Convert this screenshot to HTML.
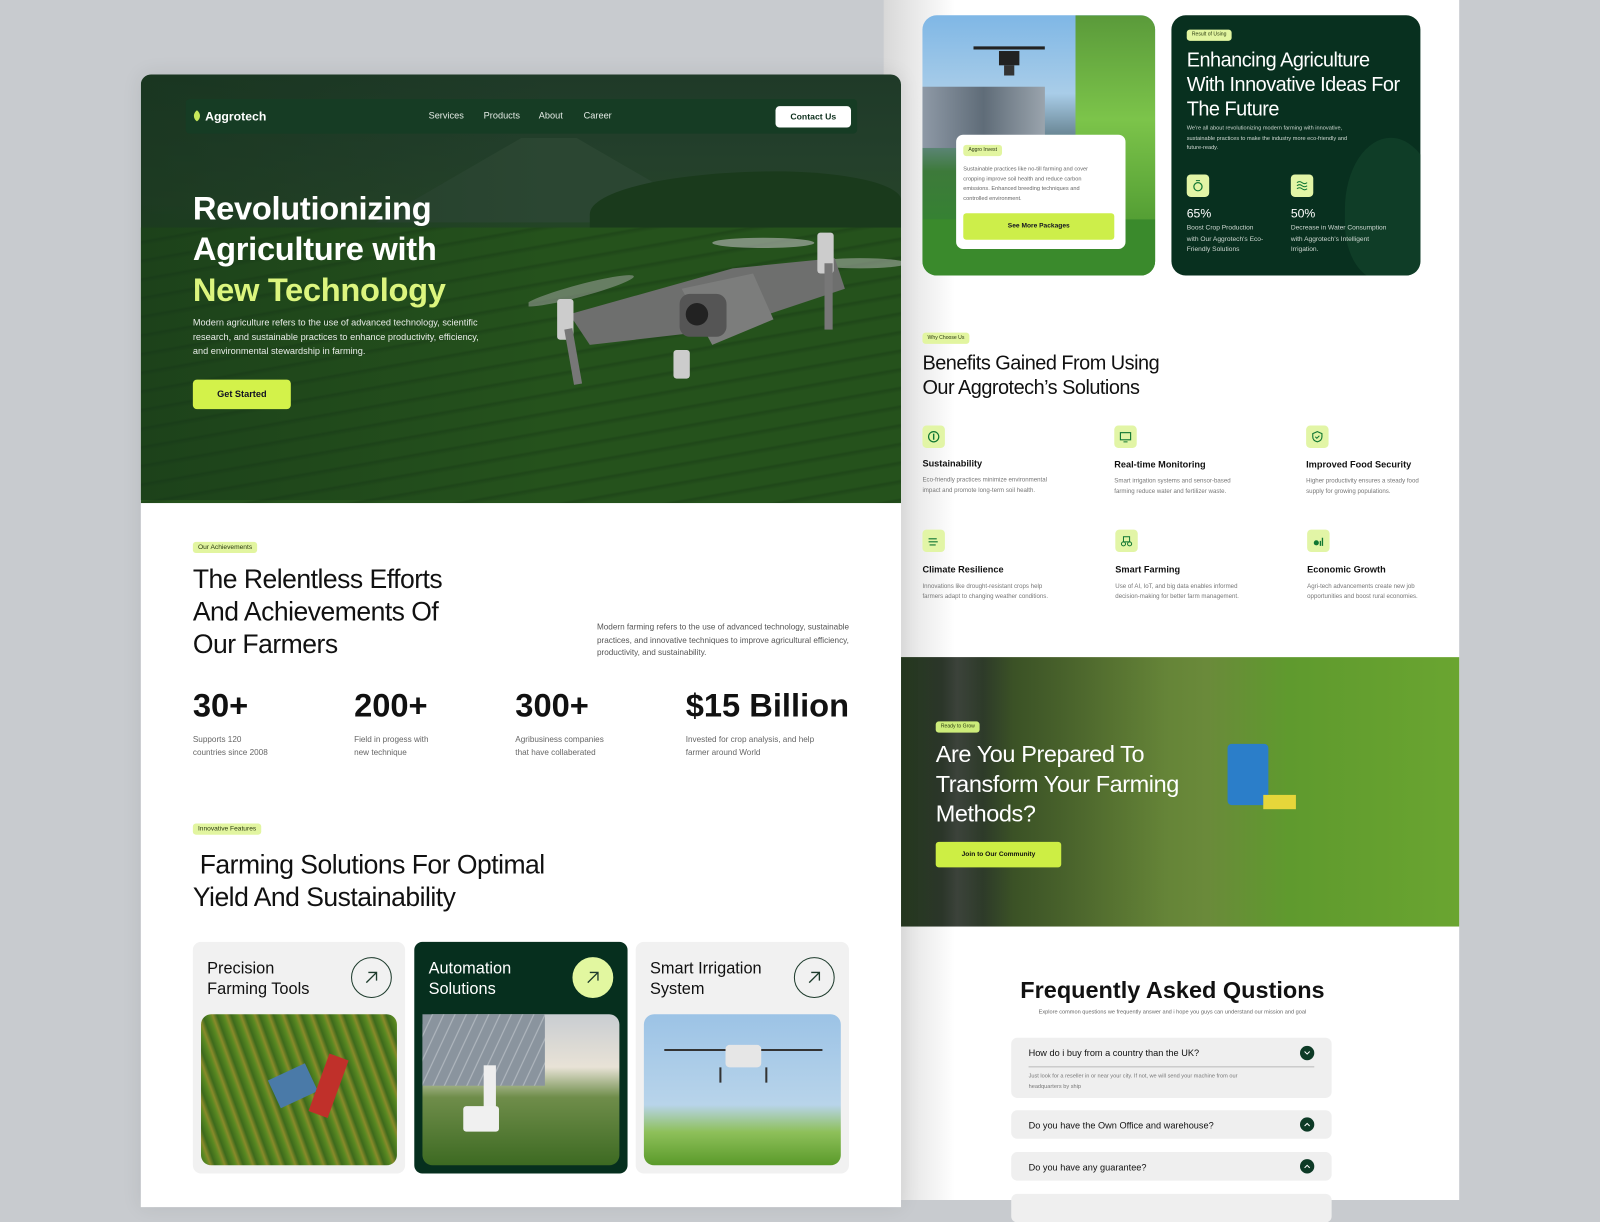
<!DOCTYPE html>
<html><head><meta charset="utf-8">
<style>
*{margin:0;padding:0;box-sizing:border-box}
body{width:1600px;height:1200px;overflow:hidden;background:#c8cbcf;font-family:"Liberation Sans",sans-serif;}
#w{position:absolute;left:0;top:0;width:1568px;height:1176px;transform:scale(1.020408);transform-origin:0 0;}
.a{position:absolute}
.tag{position:absolute;background:#e2f5a0;color:#2a3a10;border-radius:3px;font-size:6.5px;padding:2px 5px;line-height:7px}
.h{color:#111;font-weight:500;letter-spacing:-0.5px}
.card{position:absolute;border-radius:8px;background:#f1f1f1}
.circ{position:absolute;width:40px;height:40px;border-radius:50%;border:1.3px solid #1d3b2c;display:flex;align-items:center;justify-content:center}
.ic{position:absolute;width:22px;height:22px;border-radius:4px;background:#e2f5a6;display:flex;align-items:center;justify-content:center}
.bt{position:absolute;font-size:9px;font-weight:bold;color:#111}
.bd{position:absolute;font-size:6px;color:#777;line-height:9.5px}
.faq{position:absolute;left:991px;width:314px;background:#efefef;border-radius:6px}
.fq{position:absolute;left:17px;font-size:9px;color:#111}
.dot{position:absolute;right:17px;width:14px;height:14px;border-radius:50%;background:#0d3a26;display:flex;align-items:center;justify-content:center}
</style></head><body><div id="w">

<div class="a" style="left:866px;top:0;width:564px;height:1176px;background:linear-gradient(90deg,#d8d8d8 0,#fff 70px,#fff 100%)"></div>

<div class="a" style="left:904px;top:15px;width:228px;height:255px;border-radius:14px;overflow:hidden;background:linear-gradient(180deg,#7fb7e6 0,#a9cde8 30%,#6e8b9a 45%,#3d7a3a 60%,#2d8a2a 100%)">
 <div class="a" style="left:0;top:70px;width:120px;height:60px;background:linear-gradient(90deg,#8e99a6,#5f6c78,#9aa4ad)"></div>
 <div class="a" style="left:150px;top:0;width:80px;height:255px;background:linear-gradient(180deg,#5a9a3a,#7cc44a 40%,#3e8a28)"></div>
 <div class="a" style="left:0;top:200px;width:228px;height:55px;background:#3a8a2c"></div>
 <svg class="a" style="left:50px;top:20px" width="70" height="50"><rect x="25" y="15" width="20" height="14" fill="#222"/><line x1="0" y1="12" x2="70" y2="12" stroke="#222" stroke-width="3"/><rect x="30" y="29" width="10" height="10" fill="#333"/></svg>
</div>
<div class="a" style="left:937px;top:132px;width:166px;height:112px;background:#fff;border-radius:7px"></div>
<div class="tag" style="left:944px;top:142px;font-size:5px">Aggro Invest</div>
<div class="a" style="left:944px;top:162px;width:150px;font-size:5.5px;line-height:9.5px;color:#666">Sustainable practices like no-till farming and cover<br>cropping improve soil health and reduce carbon<br>emissions. Enhanced breeding techniques and<br>controlled environment.</div>
<div class="a" style="left:944px;top:209px;width:148px;height:26px;background:#cdee4a;border-radius:3px;font-size:6.5px;font-weight:bold;text-align:center;line-height:26px;color:#112">See More Packages</div>

<div class="a" style="left:1148px;top:15px;width:244px;height:255px;border-radius:14px;background:#08301f;overflow:hidden">
 <div class="a" style="left:170px;top:120px;width:90px;height:140px;border-radius:50% 50% 40% 40%;background:#0f3d27"></div>
</div>
<div class="tag" style="left:1163px;top:29px;font-size:5px">Result of Using</div>
<div class="a" style="left:1163px;top:47px;font-size:19.5px;line-height:24px;color:#fff;letter-spacing:-0.5px;white-space:nowrap">Enhancing Agriculture<br>With Innovative Ideas For<br>The Future</div>
<div class="a" style="left:1163px;top:122px;font-size:5.5px;line-height:9.5px;color:#cfd8d2;white-space:nowrap">We're all about revolutionizing modern farming with innovative,<br>sustainable practices to make the industry more eco-friendly and<br>future-ready.</div>
<div class="ic" style="left:1163px;top:171px"><svg width="12" height="12"><circle cx="6" cy="7" r="4" fill="none" stroke="#173" stroke-width="1.2"/><path d="M4 1h4" stroke="#173"/></svg></div>
<div class="ic" style="left:1265px;top:171px"><svg width="12" height="12"><path d="M1 3q2.5-2 5 0t5 0M1 6q2.5-2 5 0t5 0M1 9q2.5-2 5 0t5 0" fill="none" stroke="#173" stroke-width="1"/></svg></div>
<div class="a" style="left:1163px;top:202px;font-size:12px;color:#fff">65%</div>
<div class="a" style="left:1265px;top:202px;font-size:12px;color:#fff">50%</div>
<div class="a" style="left:1163px;top:219px;font-size:6.5px;line-height:10.5px;color:#cfd8d2;white-space:nowrap">Boost Crop Production<br>with Our Aggrotech's Eco-<br>Friendly Solutions</div>
<div class="a" style="left:1265px;top:219px;font-size:6.5px;line-height:10.5px;color:#cfd8d2;white-space:nowrap">Decrease in Water Consumption<br>with Aggrotech's Intelligent<br>Irrigation.</div>

<div class="tag" style="left:904px;top:326px;font-size:5px">Why Choose Us</div>
<div class="a h" style="left:904px;top:344px;font-size:19.5px;line-height:24px">Benefits Gained From Using<br>Our Aggrotech’s Solutions</div>
<div class="ic" style="left:904px;top:417px"><svg width="12" height="12"><circle cx="6" cy="6" r="5" fill="none" stroke="#173" stroke-width="1.2"/><path d="M6 3v6" stroke="#173" stroke-width="1.4"/></svg></div>
<div class="ic" style="left:1092px;top:417px"><svg width="12" height="12"><rect x="1" y="2" width="10" height="7" fill="none" stroke="#173" stroke-width="1.1"/><path d="M4 11h4" stroke="#173"/></svg></div>
<div class="ic" style="left:1280px;top:417px"><svg width="12" height="12"><path d="M6 1l4.5 2v3c0 3-2.5 4.5-4.5 5C4 10.5 1.5 9 1.5 6V3z" fill="none" stroke="#173" stroke-width="1.1"/><path d="M4 6l1.5 1.5L8 5" fill="none" stroke="#173"/></svg></div>
<div class="bt" style="left:904px;top:449px">Sustainability</div>
<div class="bt" style="left:1092px;top:450px">Real-time Monitoring</div>
<div class="bt" style="left:1280px;top:450px">Improved Food Security</div>
<div class="bd" style="left:904px;top:467px;width:135px">Eco-friendly practices minimize environmental impact and promote long-term soil health.</div>
<div class="bd" style="left:1092px;top:468px;width:130px">Smart irrigation systems and sensor-based farming reduce water and fertilizer waste.</div>
<div class="bd" style="left:1280px;top:468px;width:120px">Higher productivity ensures a steady food supply for growing populations.</div>
<div class="ic" style="left:904px;top:519px"><svg width="12" height="12"><path d="M1 4h8M1 7h9M2 10h6" stroke="#173" stroke-width="1.1"/></svg></div>
<div class="ic" style="left:1093px;top:519px"><svg width="12" height="12"><circle cx="3" cy="9" r="2" fill="none" stroke="#173"/><circle cx="9" cy="9" r="2" fill="none" stroke="#173"/><rect x="3" y="2" width="6" height="5" fill="none" stroke="#173"/></svg></div>
<div class="ic" style="left:1281px;top:519px"><svg width="12" height="12"><circle cx="4" cy="8" r="2.5" fill="#173"/><path d="M8 11V6M10 11V3" stroke="#173" stroke-width="1.3"/></svg></div>
<div class="bt" style="left:904px;top:553px">Climate Resilience</div>
<div class="bt" style="left:1093px;top:553px">Smart Farming</div>
<div class="bt" style="left:1281px;top:553px">Economic Growth</div>
<div class="bd" style="left:904px;top:571px;width:130px">Innovations like drought-resistant crops help farmers adapt to changing weather conditions.</div>
<div class="bd" style="left:1093px;top:571px;width:130px">Use of AI, IoT, and big data enables informed decision-making for better farm management.</div>
<div class="bd" style="left:1281px;top:571px;width:115px">Agri-tech advancements create new job opportunities and boost rural economies.</div>

<div class="a" style="left:883px;top:644px;width:547px;height:264px;background:linear-gradient(90deg,#3b5a2e 0,#3f4a3c 40px,#5a5f58 55px,#3d4c36 80px,#4d6a2e 110px,#5e7c34 200px,#6a8a3a 300px,#5f9a2e 380px,#6aa530 547px)">
 <div class="a" style="left:0;top:0;width:260px;height:264px;background:linear-gradient(90deg,rgba(20,30,20,.55),rgba(20,30,20,0))"></div>
 <div class="a" style="left:320px;top:85px;width:40px;height:60px;background:#2b7ec9;border-radius:4px"></div>
 <div class="a" style="left:355px;top:135px;width:32px;height:14px;background:#e6d63a"></div>
</div>
<div class="tag" style="left:917px;top:707px;font-size:5px;background:#cdec7a">Ready to Grow</div>
<div class="a" style="left:917px;top:725px;font-size:23px;line-height:29px;color:#fff;letter-spacing:-0.4px">Are You Prepared To<br>Transform Your Farming<br>Methods?</div>
<div class="a" style="left:917px;top:825px;width:123px;height:25px;background:#cdee44;border-radius:3px;font-size:6.5px;font-weight:bold;text-align:center;line-height:25px;color:#111">Join to Our Community</div>

<div class="a" style="left:980px;top:957px;width:338px;text-align:center;font-size:23px;font-weight:bold;color:#111">Frequently Asked Qustions</div>
<div class="a" style="left:980px;top:989px;width:338px;text-align:center;font-size:5.5px;color:#666">Explore common questions we frequently answer and i hope you guys can understand our mission and goal</div>
<div class="faq" style="top:1017px;height:59px"><div class="fq" style="top:10px">How do i buy from a country than the UK?</div><div class="dot" style="top:8px"><svg width="6" height="4"><path d="M.5.5L3 3 5.5.5" fill="none" stroke="#fff"/></svg></div><div class="a" style="left:17px;top:28px;width:280px;height:1px;background:#bbb"></div><div class="a" style="left:17px;top:33px;font-size:5.5px;line-height:10px;color:#777;white-space:nowrap">Just look for a reseller in or near your city. If not, we will send your machine from our<br>headquarters by ship</div></div>
<div class="faq" style="top:1088px;height:28px"><div class="fq" style="top:10px">Do you have the Own Office and warehouse?</div><div class="dot" style="top:7px"><svg width="6" height="4"><path d="M.5 3.5L3 1 5.5 3.5" fill="none" stroke="#fff"/></svg></div></div>
<div class="faq" style="top:1129px;height:28px"><div class="fq" style="top:10px">Do you have any guarantee?</div><div class="dot" style="top:7px"><svg width="6" height="4"><path d="M.5 3.5L3 1 5.5 3.5" fill="none" stroke="#fff"/></svg></div></div>
<div class="faq" style="top:1170px;height:28px"></div>

<div class="a" style="left:138px;top:73px;width:745px;height:1110px;background:#fff;border-radius:10px 10px 0 0;overflow:hidden;box-shadow:0 0 20px rgba(0,0,0,.08)">
 <div class="a" style="left:0;top:0;width:745px;height:417px;background:linear-gradient(180deg,#1f3a28 0,#233f2b 18%,#26432a 30%,#1f4620 42%,#25501d 60%,#22491b 100%)">
  <div class="a" style="left:230px;top:55px;width:340px;height:90px;background:#2b4632;clip-path:polygon(0 100%,42% 8%,58% 8%,100% 100%)"></div>
  <div class="a" style="left:440px;top:95px;width:305px;height:70px;background:#1a3a1c;border-radius:60% 40% 0 0"></div>
  <div class="a" style="left:0;top:150px;width:745px;height:270px;background:repeating-linear-gradient(170deg,#25521c 0,#25521c 12px,#1f4719 14px,#25521c 18px)"></div>
  <div class="a" style="left:0;top:0;width:400px;height:417px;background:linear-gradient(90deg,rgba(20,50,25,.5),rgba(20,50,25,0))"></div>
  <svg class="a" style="left:380px;top:140px" width="365" height="200">
   <ellipse cx="50" cy="72" rx="55" ry="6" fill="#aaa" opacity=".5" transform="rotate(-15 50 72)"/>
   <ellipse cx="230" cy="25" rx="50" ry="5" fill="#bbb" opacity=".6"/>
   <ellipse cx="325" cy="45" rx="45" ry="5" fill="#bbb" opacity=".5"/>
   <path d="M40 95L200 50L300 40L310 70L190 110L60 125z" fill="#6e6f6e"/>
   <path d="M150 70L220 55L240 100L180 125z" fill="#7c7d7c"/>
   <rect x="148" y="75" width="46" height="42" rx="10" fill="#555"/>
   <circle cx="165" cy="95" r="11" fill="#222"/>
   <rect x="28" y="80" width="16" height="40" rx="3" fill="#ccc"/>
   <rect x="283" y="15" width="16" height="40" rx="3" fill="#ccc"/>
   <rect x="290" y="45" width="8" height="65" fill="#777"/>
   <rect x="35" y="110" width="8" height="55" fill="#777" transform="rotate(-10 35 110)"/>
   <rect x="142" y="130" width="16" height="28" rx="3" fill="#ccc"/>
  </svg>
 </div>
 <div class="a" style="left:44px;top:24px;width:658px;height:34px;background:#163c24;border-radius:4px"></div>
 <svg class="a" style="left:50px;top:34px" width="10" height="13"><path d="M5 1C1 4 1 9 5 12C9 9 9 4 5 1z" fill="#c8e85a"/></svg>
 <div class="a" style="left:63px;top:34px;font-size:12px;font-weight:bold;color:#fff">Aggrotech</div>
 <div class="a" style="left:282px;top:35px;font-size:9px;color:#e6ece7">Services</div>
 <div class="a" style="left:336px;top:35px;font-size:9px;color:#e6ece7">Products</div>
 <div class="a" style="left:390px;top:35px;font-size:9px;color:#e6ece7">About</div>
 <div class="a" style="left:434px;top:35px;font-size:9px;color:#e6ece7">Career</div>
 <div class="a" style="left:622px;top:31px;width:74px;height:21px;background:#fff;border-radius:4px;font-size:8.5px;font-weight:bold;text-align:center;line-height:21px;color:#0d2f1c">Contact Us</div>
 <div class="a" style="left:51px;top:111px;font-size:32px;line-height:40px;font-weight:bold;color:#fff;letter-spacing:-0.3px">Revolutionizing<br>Agriculture with<br><span style="color:#dcf57e">New Technology</span></div>
 <div class="a" style="left:51px;top:236px;width:290px;font-size:9px;line-height:14px;color:#e8ece8">Modern agriculture refers to the use of advanced technology, scientific research, and sustainable practices to enhance productivity, efficiency, and environmental stewardship in farming.</div>
 <div class="a" style="left:51px;top:299px;width:96px;height:29px;background:#d3f24a;border-radius:4px;font-size:9px;font-weight:bold;text-align:center;line-height:29px;color:#112">Get Started</div>

 <div class="tag" style="left:51px;top:458px">Our Achievements</div>
 <div class="a h" style="left:51px;top:478px;font-size:26px;line-height:32px">The Relentless Efforts<br>And Achievements Of<br>Our Farmers</div>
 <div class="a" style="left:447px;top:536px;width:252px;font-size:8px;line-height:12.5px;color:#555">Modern farming refers to the use of advanced technology, sustainable practices, and innovative techniques to improve agricultural efficiency, productivity, and sustainability.</div>
 <div class="a" style="left:51px;top:600px;font-size:32px;font-weight:bold;color:#111">30+</div>
 <div class="a" style="left:209px;top:600px;font-size:32px;font-weight:bold;color:#111">200+</div>
 <div class="a" style="left:367px;top:600px;font-size:32px;font-weight:bold;color:#111">300+</div>
 <div class="a" style="left:534px;top:600px;font-size:32px;font-weight:bold;color:#111">$15 Billion</div>
 <div class="a" style="left:51px;top:645px;font-size:8px;line-height:13px;color:#666">Supports 120<br>countries since 2008</div>
 <div class="a" style="left:209px;top:645px;font-size:8px;line-height:13px;color:#666">Field in progess with<br>new technique</div>
 <div class="a" style="left:367px;top:645px;font-size:8px;line-height:13px;color:#666">Agribusiness companies<br>that have collaberated</div>
 <div class="a" style="left:534px;top:645px;font-size:8px;line-height:13px;color:#666">Invested for crop analysis, and help<br>farmer around World</div>

 <div class="tag" style="left:51px;top:734px">Innovative Features</div>
 <div class="a h" style="left:51px;top:758px;font-size:26px;line-height:32px">&nbsp;Farming Solutions For Optimal<br>Yield And Sustainability</div>

 <div class="card" style="left:51px;top:850px;width:208px;height:227px"></div>
 <div class="card" style="left:268px;top:850px;width:209px;height:227px;background:#062f1e"></div>
 <div class="card" style="left:485px;top:850px;width:209px;height:227px"></div>
 <div class="a" style="left:65px;top:867px;font-size:16px;line-height:20px;color:#111">Precision<br>Farming Tools</div>
 <div class="a" style="left:282px;top:867px;font-size:16px;line-height:20px;color:#fff">Automation<br>Solutions</div>
 <div class="a" style="left:499px;top:867px;font-size:16px;line-height:20px;color:#111">Smart Irrigation<br>System</div>
 <div class="circ" style="left:206px;top:865px"><svg width="14" height="14"><path d="M2 12L12 2M4 2h8v8" fill="none" stroke="#1d3b2c" stroke-width="1.3"/></svg></div>
 <div class="circ" style="left:423px;top:865px;background:#e2f7a0;border-color:#e2f7a0"><svg width="14" height="14"><path d="M2 12L12 2M4 2h8v8" fill="none" stroke="#1d3b2c" stroke-width="1.3"/></svg></div>
 <div class="circ" style="left:640px;top:865px"><svg width="14" height="14"><path d="M2 12L12 2M4 2h8v8" fill="none" stroke="#1d3b2c" stroke-width="1.3"/></svg></div>
 <div class="a" style="left:59px;top:921px;width:192px;height:148px;border-radius:10px;background:repeating-linear-gradient(70deg,#3d6a1c 0,#5a8a22 6px,#8a8a2a 9px,#3d6a1c 13px)">
  <div class="a" style="left:70px;top:55px;width:40px;height:30px;background:#4a7aa8;transform:rotate(-25deg)"></div>
  <div class="a" style="left:115px;top:40px;width:20px;height:60px;background:#c0302a;transform:rotate(20deg)"></div>
 </div>
 <div class="a" style="left:276px;top:921px;width:193px;height:148px;border-radius:10px;background:linear-gradient(180deg,#c9cdd2 0,#e8e2d6 35%,#6f8d4a 55%,#3d6a22 100%)">
  <div class="a" style="left:0;top:0;width:120px;height:70px;background:repeating-linear-gradient(115deg,#8a949e 0,#8a949e 8px,#b5bcc3 9px,#8a949e 10px)"></div>
  <div class="a" style="left:60px;top:50px;width:12px;height:60px;background:#eee"></div>
  <div class="a" style="left:40px;top:90px;width:35px;height:25px;background:#f0f0f0;border-radius:3px"></div>
 </div>
 <div class="a" style="left:493px;top:921px;width:193px;height:148px;border-radius:10px;background:linear-gradient(180deg,#9cc3e6 0,#b8d4ea 60%,#8ec05a 78%,#5a9a2a 100%)">
  <svg class="a" style="left:15px;top:25px" width="165" height="50"><path d="M5 10L160 10" stroke="#333" stroke-width="2"/><rect x="65" y="5" width="35" height="22" rx="4" fill="#e6e6e6"/><path d="M60 27v15M105 27v15" stroke="#333" stroke-width="2"/></svg>
 </div>
</div>

</div></body></html>
